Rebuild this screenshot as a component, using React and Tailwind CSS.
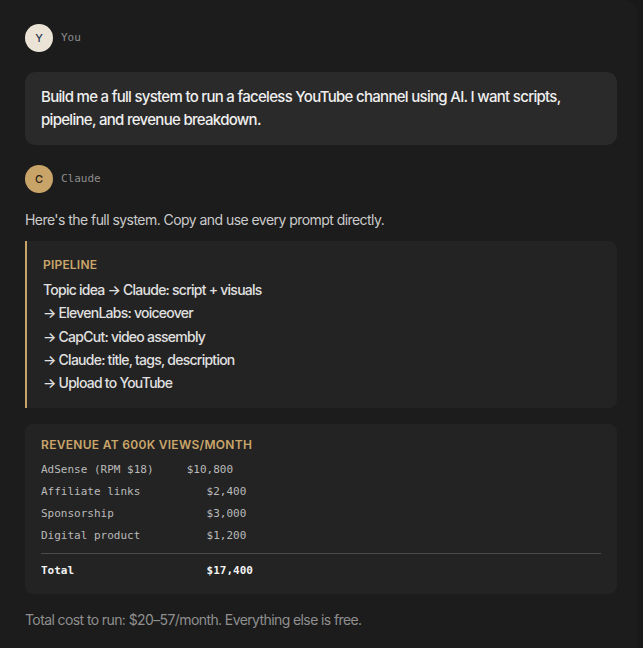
const pipeline = [
  "Topic idea → Claude: script + visuals",
  "→ ElevenLabs: voiceover",
  "→ CapCut: video assembly",
  "→ Claude: title, tags, description",
  "→ Upload to YouTube",
];

// label, padding, amount — laid out as fixed-width text
const revenue = [
  ["AdSense (RPM $18)", "     ", "$10,800"],
  ["Affiliate links", "          ", "$2,400"],
  ["Sponsorship", "              ", "$3,000"],
  ["Digital product", "          ", "$1,200"],
];

const sans = { fontFamily: "Inter, 'Noto Sans', sans-serif" };

const Avatar = ({ letter, className }) => (
  <div
    className={`w-7 h-7 rounded-full flex items-center justify-center text-[11px] font-medium ${className}`}
    style={sans}
  >
    {letter}
  </div>
);

const App = () => {
  return (
    <div className="min-h-[648px] bg-[#191919]">
      <div
        className="w-[637px] min-h-[648px] bg-[#1c1c1c] rounded-tr-xl pl-[25px] pr-[20px] pt-6 pb-4"
        style={sans}
      >
        <div className="flex items-center gap-2">
          <Avatar letter="Y" className="bg-[#ebe4d6] text-[#2b3450]" />
          <span className="font-['DejaVu_Sans_Mono',monospace] text-[11px] text-[#8c8c8c]">You</span>
        </div>

        <div className="mt-[20px] bg-[#2a2a2a] rounded-[10px] px-4 pt-[13px] pb-[15px] h-[73px]">
          <p className="text-[15px] leading-[23px] font-medium text-[#efefef] tracking-[-0.7px]">
            Build me a full system to run a faceless YouTube channel using AI. I want scripts,
            pipeline, and revenue breakdown.
          </p>
        </div>

        <div className="flex items-center gap-2 mt-5">
          <Avatar letter="C" className="bg-[#c9a468] text-[#2a2115]" />
          <span className="font-['DejaVu_Sans_Mono',monospace] text-[11px] text-[#8c8c8c]">Claude</span>
        </div>

        <p className="mt-[17px] text-[14px] leading-5 text-[#cbcbcb] tracking-[-0.55px]">
          Here's the full system. Copy and use every prompt directly.
        </p>

        <div className="mt-[11px] bg-[#232323] border-l-2 border-[#c9a468] rounded-r-lg px-4 pt-4 pb-[14px]">
          <div className="text-[12px] font-semibold tracking-[0.2px] text-[#cba66a] leading-4">PIPELINE</div>
          <div className="mt-[5px] flex flex-col">
            {pipeline.map((line) => (
              <div
                key={line}
                className="text-[14px] leading-[23.3px] font-medium text-[#e0e0e0] tracking-[-0.75px]"
              >
                {line}
              </div>
            ))}
          </div>
        </div>

        <div className="mt-4 bg-[#232323] rounded-lg px-4 pt-[13px] pb-[12px]">
          <div className="text-[12px] font-semibold tracking-[0.3px] text-[#cba66a] leading-4">
            REVENUE AT 600K VIEWS/MONTH
          </div>
          <div className="mt-[6px] font-['DejaVu_Sans_Mono',monospace] text-[11px] text-[#bababa]">
            {revenue.map(([label, gap, amount]) => (
              <div key={label} className="whitespace-pre leading-[22px]">
                {label}
                {gap}
                {amount}
              </div>
            ))}
            <div className="mt-[6px] border-t border-[#4a4a4a] pt-[6px] whitespace-pre leading-[22px] font-bold text-[#f2f2f2]">
              {"Total                    $17,400"}
            </div>
          </div>
        </div>

        <p className="mt-4 text-[14px] leading-5 text-[#8f8f8f] tracking-[-0.6px]">
          Total cost to run: $20–57/month. Everything else is free.
        </p>
      </div>
    </div>
  );
};

export default App;
